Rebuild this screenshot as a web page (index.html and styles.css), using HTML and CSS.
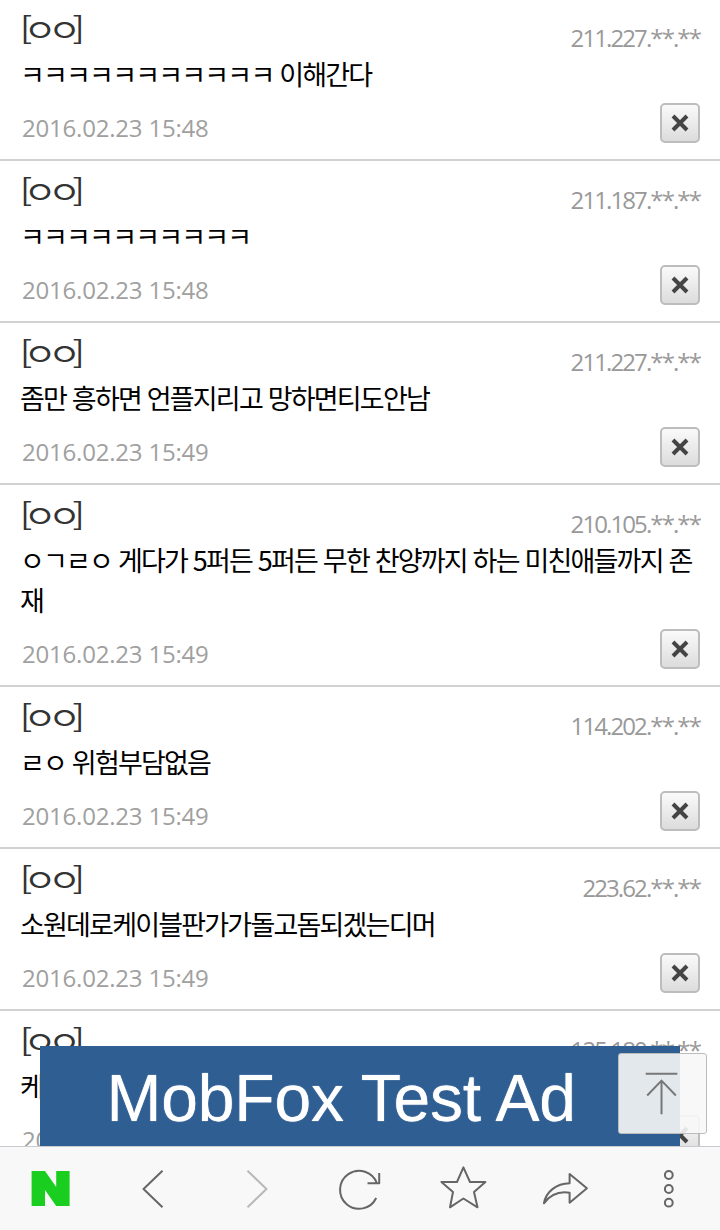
FILE: index.html
```html
<!DOCTYPE html>
<html lang="ko">
<head>
<meta charset="utf-8">
<title>댓글</title>
<link rel="stylesheet" href="styles.css">
</head>
<body>
<main class="list">
  <article class="row">
    <div class="head"><span class="name">[ㅇㅇ]</span><span class="ip">211.227.**.**</span></div>
    <p class="text">ㅋㅋㅋㅋㅋㅋㅋㅋㅋㅋㅋ 이해간다</p>
    <div class="foot"><span class="date">2016.02.23 15:48</span><button class="del"><svg viewBox="0 0 36 36" class="x"><path d="M11 11l14 14M25 11L11 25"/></svg></button></div>
  </article>
  <article class="row">
    <div class="head"><span class="name">[ㅇㅇ]</span><span class="ip">211.187.**.**</span></div>
    <p class="text">ㅋㅋㅋㅋㅋㅋㅋㅋㅋㅋ</p>
    <div class="foot"><span class="date">2016.02.23 15:48</span><button class="del"><svg viewBox="0 0 36 36" class="x"><path d="M11 11l14 14M25 11L11 25"/></svg></button></div>
  </article>
  <article class="row">
    <div class="head"><span class="name">[ㅇㅇ]</span><span class="ip">211.227.**.**</span></div>
    <p class="text">좀만 흥하면 언플지리고 망하면티도안남</p>
    <div class="foot"><span class="date">2016.02.23 15:49</span><button class="del"><svg viewBox="0 0 36 36" class="x"><path d="M11 11l14 14M25 11L11 25"/></svg></button></div>
  </article>
  <article class="row">
    <div class="head"><span class="name">[ㅇㅇ]</span><span class="ip">210.105.**.**</span></div>
    <p class="text">ㅇㄱㄹㅇ 게다가 5퍼든 5퍼든 무한 찬양까지 하는 미친애들까지 존재</p>
    <div class="foot"><span class="date">2016.02.23 15:49</span><button class="del"><svg viewBox="0 0 36 36" class="x"><path d="M11 11l14 14M25 11L11 25"/></svg></button></div>
  </article>
  <article class="row">
    <div class="head"><span class="name">[ㅇㅇ]</span><span class="ip">114.202.**.**</span></div>
    <p class="text">ㄹㅇ 위험부담없음</p>
    <div class="foot"><span class="date">2016.02.23 15:49</span><button class="del"><svg viewBox="0 0 36 36" class="x"><path d="M11 11l14 14M25 11L11 25"/></svg></button></div>
  </article>
  <article class="row">
    <div class="head"><span class="name">[ㅇㅇ]</span><span class="ip">223.62.**.**</span></div>
    <p class="text">소원데로케이블판가가돌고돔되겠는디머</p>
    <div class="foot"><span class="date">2016.02.23 15:49</span><button class="del"><svg viewBox="0 0 36 36" class="x"><path d="M11 11l14 14M25 11L11 25"/></svg></button></div>
  </article>
  <article class="row">
    <div class="head"><span class="name">[ㅇㅇ]</span><span class="ip">125.180.**.**</span></div>
    <p class="text">케이블</p>
    <div class="foot"><span class="date">2016.02.23 15:49</span><button class="del"><svg viewBox="0 0 36 36" class="x"><path d="M11 11l14 14M25 11L11 25"/></svg></button></div>
  </article>
</main>

<div class="ad"><span class="ad-text">MobFox Test Ad</span></div>

<button class="top" aria-label="맨 위로">
  <svg viewBox="0 0 88 80" class="top-icon"><path d="M27 20h32M43 61V27M28.500 42L43 27l14.500 15"/></svg>
</button>

<nav class="bar">
  <svg class="ico" viewBox="0 0 60 60"><path class="naver" d="M10.600 12H24l11.200 16V12h13.400v35H35.200L24 31v16H10.600z"/></svg>
  <svg class="ico" viewBox="0 0 60 60"><path class="line" d="M38.500 11.700L19.500 30l19 18.300"/></svg>
  <svg class="ico" viewBox="0 0 60 60"><path class="line light" d="M20.500 11.700L39.500 30l-19 18.300"/></svg>
  <svg class="ico" viewBox="0 0 60 60"><path class="line" d="M46.200 39A19 19 0 1 1 47 24.500M37.500 24.300h11.700V14"/></svg>
  <svg class="ico" viewBox="0 0 60 60"><path class="line" d="M30.400 8.300L37 23h15.400L41 33l3.500 15.300-14.100-8.800L17 48.300 20 33 8.400 23H24z"/></svg>
  <svg class="ico" viewBox="0 0 60 60"><path class="line" d="M34.600 15l17.300 14.300-17.300 14.400v-10C24 32 15 36 8.900 44.300 11 33 21 24.500 34.600 24.300z"/></svg>
  <svg class="ico" viewBox="0 0 60 60"><circle class="line" cx="30.800" cy="16" r="3.900"/><circle class="line" cx="30.800" cy="30" r="3.900"/><circle class="line" cx="30.800" cy="43.700" r="3.900"/></svg>
</nav>
</body>
</html>
```
FILE: styles.css
```css
* { box-sizing: border-box; }
html, body { margin: 0; padding: 0; background: #fff; }
body { height: 1230px; overflow: hidden; font-family: "Noto Sans CJK KR", "Open Sans", sans-serif; }

.list { margin-top: -1px; }
.row { padding: 0 20px 16px 20px; border-bottom: 2px solid #d2d2d2; }
.head { display: flex; justify-content: space-between; height: 55px; }
.name { display: inline-block; font-size: 30px; line-height: 58px; color: #333; letter-spacing: -7.200px; transform: scaleX(1.2); transform-origin: left center; }
.ip { font-family: "Open Sans", sans-serif; font-size: 24px; line-height: 78px; letter-spacing: -1.900px; color: #999; }
.text { margin: 0; font-size: 27px; line-height: 40px; letter-spacing: -1.800px; color: #000; }
.foot { display: flex; justify-content: space-between; margin-top: 9px; height: 40px; }
.date { font-family: "Open Sans", sans-serif; font-size: 24px; line-height: 50px; letter-spacing: -.2px; color: #a0a0a0; padding-left: 2px; }
.del { width: 40px; height: 40px; padding: 0; border: 2px solid #bdbdbd; border-radius: 5px; background: linear-gradient(#fafafa, #dcdcdc); display: flex; }
.x { width: 36px; height: 36px; fill: none; stroke: #444; stroke-width: 4; }

.ad { position: fixed; left: 40px; top: 1046px; width: 640px; height: 100px; background: #2f5e93; display: flex; align-items: center; padding: 3px 0 0 66.500px; }
.ad-text { font-family: "Liberation Sans", sans-serif; font-size: 66px; color: #fff; letter-spacing: -.2px; text-shadow: 0 0 1px #fff; filter: blur(.6px); }

.top { position: fixed; left: 618px; top: 1053px; width: 89px; height: 81px; padding: 0; border: 1px solid #bbb; border-radius: 3px; background: rgba(247,247,247,.9); }
.top-icon { display: block; width: 87px; height: 79px; fill: none; stroke: #777; stroke-width: 2; }

.bar { position: fixed; left: 0; top: 1146px; width: 720px; height: 84px; background: #f8f8f8; border-top: 1px solid #c8ccd0; display: grid; grid-template-columns: repeat(7, 102.800px); }
.ico { width: 60px; height: 60px; justify-self: center; margin-top: 12px; }
.naver { fill: #19ce1e; }
.line { fill: none; stroke: #666; stroke-width: 2; stroke-linejoin: round; }
.light { stroke: #b8b8b8; }
```
